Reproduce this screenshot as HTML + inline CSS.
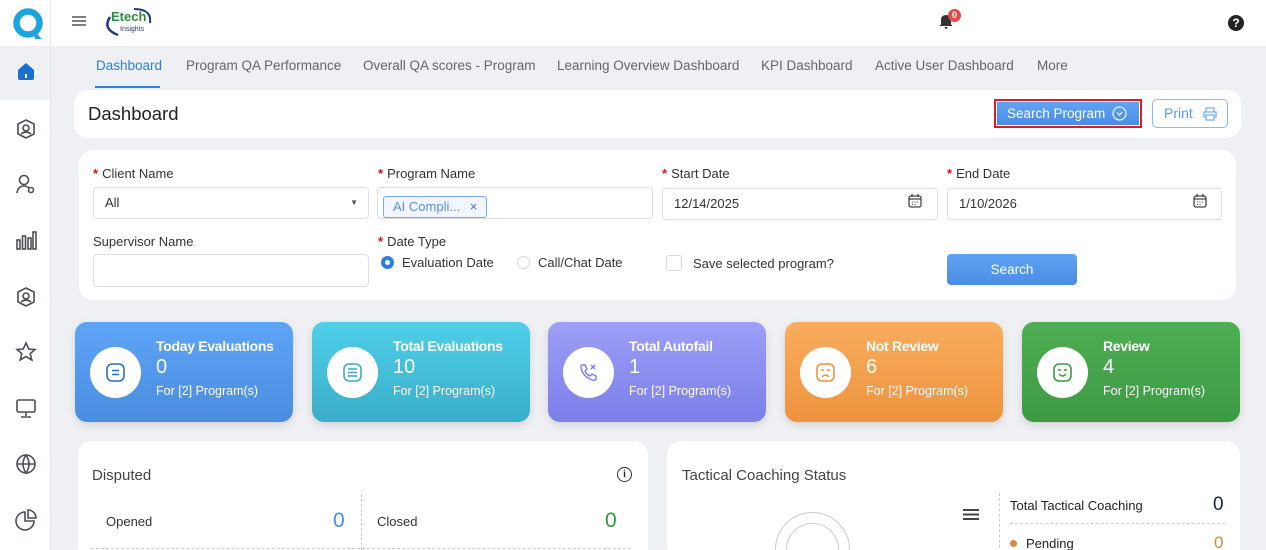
<!DOCTYPE html>
<html style="overflow:hidden;width:1266px;height:550px"><head><meta charset="utf-8"><style>
*{box-sizing:border-box;margin:0;padding:0}
body{width:1266px;height:550px;overflow:hidden;background:#eef0f3;font-family:"Liberation Sans",sans-serif;position:relative;color:#222}
.abs{position:absolute}
.side{left:0;top:0;width:51px;height:550px;background:#fff;border-right:1px solid #e2e4e8}
.top{left:51px;top:0;width:1215px;height:46px;background:#fff}
.tab{top:58px;font-size:13.5px;color:#666}
.card{background:#fff;border-radius:14px}
.lbl{font-size:13px;color:#333}
.lbl b{color:#d11;font-weight:bold;margin-right:4px}
.inp{height:32px;border:1px solid #dcdfe4;border-radius:4px;background:#fff;font-size:13px;padding:0 11px;line-height:30px;color:#333}
.stat{top:322px;width:218px;height:100px;border-radius:12px;color:#fff;box-shadow:0 3px 8px rgba(0,0,0,.12)}
.stat .c{position:absolute;left:15px;top:25px;width:51px;height:51px;border-radius:50%;background:#fff}
.stat .t{position:absolute;left:81px;top:16px;font-size:14px;font-weight:bold;letter-spacing:-.3px}
.stat .n{position:absolute;left:81px;top:34px;font-size:20px}
.stat .p{position:absolute;left:81px;top:62px;font-size:12.5px}
.ic{stroke:#4a4f57;fill:none;stroke-width:1.6}
</style></head><body>
<div class="abs side"></div>
<svg class="abs" style="left:12px;top:7px" width="34" height="34" viewBox="0 0 34 34"><circle cx="16" cy="16" r="11.5" fill="none" stroke="#1ba4e0" stroke-width="6.5"/><path d="M21 23 L30 32 L23 32 Z" fill="#1ba4e0"/></svg>
<div class="abs" style="left:0;top:46px;width:50px;height:54px;background:#eef0f3"></div>
<svg class="abs" style="left:16px;top:61px" width="20" height="20" viewBox="0 0 20 20"><path d="M2 9 L10 2 L18 9 V17 Q18 19 16 19 H4 Q2 19 2 17Z" fill="#1a6fd0"/><rect x="9" y="13" width="2" height="4" fill="#fff"/></svg>
<svg class="abs" style="left:15px;top:118px" width="22" height="420" viewBox="0 0 22 420">
<g class="ic"><path d="M11 2 L19 6 V16 L11 20 L3 16 V6Z"/><circle cx="11" cy="10" r="3"/><path d="M6 16 Q11 12 16 16"/></g>
<g class="ic" transform="translate(0,55)"><circle cx="9" cy="7" r="4.5"/><path d="M2 20 Q3 13 9 13 Q12 13 14 15"/><circle cx="16" cy="17" r="2.5"/></g>
<g class="ic" transform="translate(0,112)"><rect x="2" y="10" width="3" height="9"/><rect x="7.5" y="6" width="3" height="13"/><rect x="13" y="8" width="3" height="11"/><rect x="18" y="2" width="3" height="17"/></g>
<g class="ic" transform="translate(0,168)"><path d="M11 2 L19 6 V16 L11 20 L3 16 V6Z"/><circle cx="11" cy="10" r="3"/><path d="M6 16 Q11 12 16 16"/></g>
<g class="ic" transform="translate(0,223)"><path d="M11 2 L13.8 8 L20 8.5 L15.2 12.7 L16.8 19 L11 15.6 L5.2 19 L6.8 12.7 L2 8.5 L8.2 8Z"/></g>
<g class="ic" transform="translate(0,279)"><rect x="2" y="3" width="18" height="12" rx="1.5"/><path d="M11 15 V19 M6 20 H16"/></g>
<g class="ic" transform="translate(0,335)"><circle cx="11" cy="11" r="9"/><path d="M2 11 H20 M11 2 Q5 11 11 20 Q17 11 11 2"/></g>
<g class="ic" transform="translate(0,391)"><path d="M10 3 A9 9 0 1 0 19 12 H10Z"/><path d="M13 1 A8 8 0 0 1 21 9 H13Z"/></g>
</svg>
<div class="abs top"></div>
<svg class="abs" style="left:72px;top:15px" width="14" height="12"><path d="M0 2H14M0 6H14M0 10H14" stroke="#555" stroke-width="1.5"/></svg>
<svg class="abs" style="left:100px;top:5px" width="56" height="32" viewBox="0 0 56 32"><path d="M10 12 Q2 24 18 30" stroke="#1d3a7a" stroke-width="2.5" fill="none"/><path d="M34 4 Q52 4 50 18" stroke="#1d3a7a" stroke-width="2" fill="none"/><text x="11" y="16" font-family="Liberation Sans" font-weight="bold" font-size="13" fill="#2e8b3a">Etech</text><text x="20" y="26" font-family="Liberation Sans" font-size="7" fill="#2a3f7a">Insights</text></svg>
<svg class="abs" style="left:938px;top:13px" width="16" height="16" viewBox="0 0 16 16"><path d="M3 12 V7 Q3 2 8 2 Q13 2 13 7 V12 H14 V13 H2 V12Z M6.5 14 H9.5 Q9 16 8 16 Q7 16 6.5 14" fill="#333"/></svg>
<div class="abs" style="left:948px;top:9px;width:13px;height:13px;border-radius:50%;background:#e04a4a;color:#fff;font-size:9px;text-align:center;line-height:13px;font-weight:bold">0</div>
<div class="abs" style="left:1228px;top:15px;width:16px;height:16px;border-radius:50%;background:#222;color:#fff;font-size:12px;font-weight:bold;text-align:center;line-height:16px">?</div>

<div class="abs tab" style="left:96px;color:#2f7ed8">Dashboard</div>
<div class="abs" style="left:95px;top:86px;width:65px;height:2px;background:#2f7ed8"></div>
<div class="abs tab" style="left:186px">Program QA Performance</div>
<div class="abs tab" style="left:363px">Overall QA scores - Program</div>
<div class="abs tab" style="left:557px">Learning Overview Dashboard</div>
<div class="abs tab" style="left:761px">KPI Dashboard</div>
<div class="abs tab" style="left:875px">Active User Dashboard</div>
<div class="abs tab" style="left:1037px">More</div>

<div class="abs card" style="left:74px;top:90px;width:1167px;height:48px"></div>
<div class="abs" style="left:88px;top:103px;font-size:18.5px;color:#222">Dashboard</div>
<div class="abs" style="left:994px;top:99px;width:148px;height:29px;border:2px solid #e01b24;padding:1px"><div style="background:linear-gradient(#5fa3f3,#4a8ee5);height:100%;color:#fff;font-size:13.5px;display:flex;align-items:center;padding-left:10px">Search Program<svg style="margin-left:7px" width="15" height="15" viewBox="0 0 15 15"><circle cx="7.5" cy="7.5" r="6.5" fill="none" stroke="#fff" stroke-width="1.2"/><path d="M5 6.5L7.5 9L10 6.5" fill="none" stroke="#fff" stroke-width="1.2"/></svg></div></div>
<div class="abs" style="left:1152px;top:99px;width:76px;height:29px;border:1px solid #8ab8f0;border-radius:5px;color:#5c9ae8;font-size:14px;line-height:27px;padding-left:11px;background:#fff">Print <svg style="vertical-align:-3px;margin-left:6px" width="14" height="14" viewBox="0 0 14 14"><path d="M3 5V1H11V5M3 10H1V5H13V10H11M3 8H11V13H3Z" fill="none" stroke="#7aaeee" stroke-width="1.3"/></svg></div>

<div class="abs card" style="left:79px;top:150px;width:1157px;height:150px"></div>
<div class="abs lbl" style="left:93px;top:166px"><b>*</b>Client Name</div>
<div class="abs inp" style="left:93px;top:187px;width:276px">All<span style="position:absolute;right:10px;top:0;font-size:8px;color:#555">▼</span></div>
<div class="abs lbl" style="left:378px;top:166px"><b>*</b>Program Name</div>
<div class="abs inp" style="left:377px;top:187px;width:276px;padding:4px 5px"><span style="display:inline-block;border:1px solid #7aa9ec;background:#f2f7ff;color:#5b8fdc;border-radius:3px;height:22px;line-height:20px;padding:0 9px;font-size:13px">AI Compli... <span style="margin-left:6px;color:#3a6fd0">×</span></span></div>
<div class="abs lbl" style="left:662px;top:166px"><b>*</b>Start Date</div>
<div class="abs inp" style="left:662px;top:188px;width:276px">12/14/2025</div>
<div class="abs lbl" style="left:947px;top:166px"><b>*</b>End Date</div>
<div class="abs inp" style="left:947px;top:188px;width:275px">1/10/2026</div>
<svg class="abs" style="left:908px;top:194px" width="14" height="14"><rect x="1" y="2" width="12" height="11" rx="2" fill="none" stroke="#444" stroke-width="1.3"/><path d="M1 5H13M4 0V3M10 0V3" stroke="#444" stroke-width="1.3"/><path d="M4 8H5M6.5 8H7.5M9 8H10M4 10.5H5M6.5 10.5H7.5" stroke="#444"/></svg>
<svg class="abs" style="left:1193px;top:194px" width="14" height="14"><rect x="1" y="2" width="12" height="11" rx="2" fill="none" stroke="#444" stroke-width="1.3"/><path d="M1 5H13M4 0V3M10 0V3" stroke="#444" stroke-width="1.3"/><path d="M4 8H5M6.5 8H7.5M9 8H10M4 10.5H5M6.5 10.5H7.5" stroke="#444"/></svg>
<div class="abs lbl" style="left:93px;top:234px">Supervisor Name</div>
<div class="abs inp" style="left:93px;top:254px;width:276px;height:33px"></div>
<div class="abs lbl" style="left:378px;top:234px"><b>*</b>Date Type</div>
<div class="abs" style="left:381px;top:256px;width:13px;height:13px;border-radius:50%;border:4px solid #2f7ed8"></div>
<div class="abs lbl" style="left:402px;top:255px">Evaluation Date</div>
<div class="abs" style="left:517px;top:256px;width:13px;height:13px;border-radius:50%;border:1px solid #d5d8dd"></div>
<div class="abs lbl" style="left:538px;top:255px">Call/Chat Date</div>
<div class="abs" style="left:666px;top:255px;width:16px;height:16px;border-radius:3px;border:1px solid #d5d8dd"></div>
<div class="abs lbl" style="left:693px;top:256px">Save selected program?</div>
<div class="abs" style="left:947px;top:254px;width:130px;height:31px;border-radius:4px;background:linear-gradient(#5fa3f3,#4a8ee5);color:#fff;font-size:13.5px;text-align:center;line-height:31px">Search</div>

<div class="abs stat" style="left:75px;background:linear-gradient(#5ea4f7,#4a8ddf)"><div class="c"><svg style="margin:15px" width="21" height="21"><rect x="2" y="2" width="17" height="17" rx="5" fill="none" stroke="#2a6fc7" stroke-width="1.6"/><path d="M7 8.5H14M7 12.5H14" stroke="#2a6fc7" stroke-width="1.6"/></svg></div><div class="t">Today Evaluations</div><div class="n">0</div><div class="p">For [2] Program(s)</div></div>
<div class="abs stat" style="left:312px;background:linear-gradient(#4fd0ea,#3badc8)"><div class="c"><svg style="margin:15px" width="21" height="21"><rect x="2" y="2" width="17" height="17" rx="5" fill="none" stroke="#3aaac6" stroke-width="1.6"/><path d="M6 7H15M6 10.5H15M6 14H15" stroke="#3aaac6" stroke-width="1.4"/></svg></div><div class="t">Total Evaluations</div><div class="n">10</div><div class="p">For [2] Program(s)</div></div>
<div class="abs stat" style="left:548px;background:linear-gradient(#9e9ff7,#7b7ee9)"><div class="c"><svg style="margin:15px" width="21" height="21"><path d="M4 3 L7 3 L9 7 L7 9 Q9 13 12 14 L14 12 L18 14 L18 17 Q17 19 14 18 Q4 14 3 5 Q3 3 4 3Z" fill="none" stroke="#7b7ee9" stroke-width="1.4"/><path d="M13 3L17 7M17 3L13 7" stroke="#7b7ee9" stroke-width="1.4"/></svg></div><div class="t">Total Autofail</div><div class="n">1</div><div class="p">For [2] Program(s)</div></div>
<div class="abs stat" style="left:785px;background:linear-gradient(#f8ad5e,#ee933e)"><div class="c"><svg style="margin:15px" width="21" height="21"><rect x="2" y="2" width="17" height="17" rx="5" fill="none" stroke="#ee933e" stroke-width="1.6"/><path d="M6 8H9M12 8H15M7 15Q10.5 11 14 15" fill="none" stroke="#ee933e" stroke-width="1.4"/></svg></div><div class="t">Not Review</div><div class="n">6</div><div class="p">For [2] Program(s)</div></div>
<div class="abs stat" style="left:1022px;background:linear-gradient(#4eae52,#3d9a44)"><div class="c"><svg style="margin:15px" width="21" height="21"><rect x="2" y="2" width="17" height="17" rx="5" fill="none" stroke="#3d9a44" stroke-width="1.6"/><path d="M6 8H9M12 8H15M7 12Q10.5 16 14 12" fill="none" stroke="#3d9a44" stroke-width="1.4"/></svg></div><div class="t">Review</div><div class="n">4</div><div class="p">For [2] Program(s)</div></div>

<div class="abs card" style="left:78px;top:441px;width:570px;height:120px"></div>
<div class="abs" style="left:92px;top:467px;font-size:15px;color:#444">Disputed</div>
<div class="abs" style="left:617px;top:467px;width:15px;height:15px;border-radius:50%;border:1.4px solid #333;font-size:10px;font-weight:bold;text-align:center;line-height:13px">i</div>
<div class="abs" style="left:106px;top:514px;font-size:13px;color:#333">Opened</div>
<div class="abs" style="left:333px;top:509px;font-size:21px;color:#4a8ee8">0</div>
<div class="abs" style="left:361px;top:494px;height:56px;border-left:1px dashed #ccc"></div>
<div class="abs" style="left:377px;top:514px;font-size:13px;color:#333">Closed</div>
<div class="abs" style="left:605px;top:509px;font-size:21px;color:#2f9a3c">0</div>
<div class="abs" style="left:91px;top:548px;width:540px;border-top:1px dashed #ccc"></div>

<div class="abs card" style="left:667px;top:441px;width:573px;height:120px"></div>
<div class="abs" style="left:682px;top:467px;font-size:15px;color:#444">Tactical Coaching Status</div>
<div class="abs" style="left:775px;top:512px;width:75px;height:75px;border-radius:50%;border:1px solid #ccc"></div>
<div class="abs" style="left:786px;top:523px;width:53px;height:53px;border-radius:50%;border:1px solid #ccc"></div>
<svg class="abs" style="left:963px;top:508px" width="16" height="13"><path d="M0 2H16M0 6.5H16M0 11H16" stroke="#444" stroke-width="2"/></svg>
<div class="abs" style="left:999px;top:493px;height:60px;border-left:1px dashed #ccc"></div>
<div class="abs" style="left:1010px;top:498px;font-size:13px;color:#222">Total Tactical Coaching</div>
<div class="abs" style="left:1213px;top:494px;font-size:19px;color:#1a2440">0</div>
<div class="abs" style="left:1010px;top:523px;width:215px;border-top:1px dashed #ccc"></div>
<div class="abs" style="left:1010px;top:540px;width:7px;height:7px;border-radius:50%;background:#d08a3a"></div>
<div class="abs" style="left:1026px;top:536px;font-size:13px;color:#222">Pending</div>
<div class="abs" style="left:1214px;top:533px;font-size:17px;color:#d08a3a">0</div>
</body></html>
